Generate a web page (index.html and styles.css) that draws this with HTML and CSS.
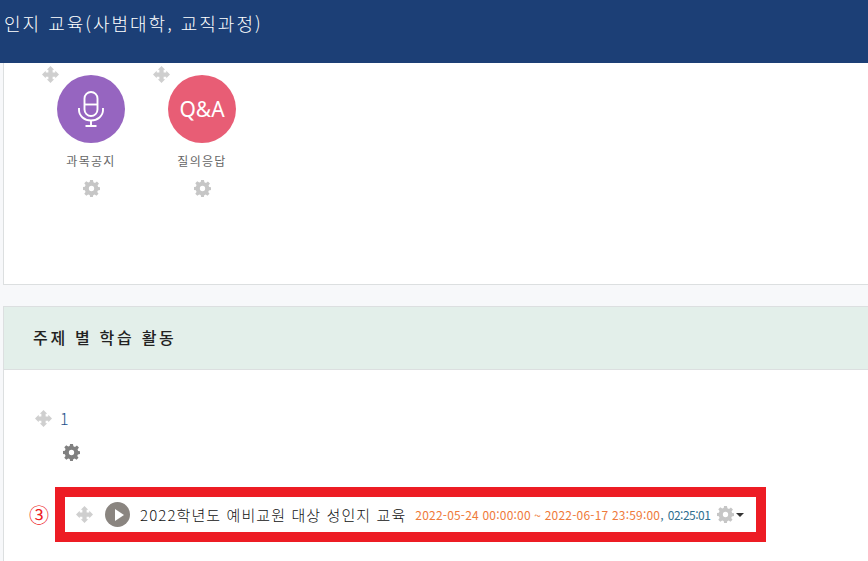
FILE: index.html
```html
<!DOCTYPE html>
<html lang="ko">
<head>
  <meta charset="UTF-8" />
  <meta name="viewport" content="width=device-width, initial-scale=1.0" />
  <title>성인지 교육</title>
  <link rel="stylesheet" href="styles.css">
</head>
<body>
  <svg class="sprites" aria-hidden="true">
    <symbol id="move" viewBox="0 0 16 16">
      <path d="M8 0 11.500 3.500H10V6H12.500V4.500L16 8 12.500 11.500V10H10V12.500H11.500L8 16 4.500 12.500H6V10H3.500V11.500L0 8 3.500 4.500V6H6V3.500H4.500Z"/>
    </symbol>
    <symbol id="gear" viewBox="0 0 16 16">
      <path fill-rule="evenodd" d="M6.600 0H9.400L9.800 2.200 11.300 2.800 13.100 1.500 15 3.400 13.700 5.200 14.300 6.600 16 6.900V9.400L14 9.800 13.400 11.300 14.600 13 12.700 14.900 11 13.700 9.600 14.300 9.300 16H6.700L6.300 14.200 4.900 13.600 3.100 14.800 1.200 12.900 2.400 11.200 1.800 9.700 0 9.400V6.700L1.800 6.300 2.400 4.800 1.200 3.100 3.100 1.200 4.900 2.400 6.300 1.800ZM8 5.500A2.500 2.500 0 1 0 8 10.500 2.500 2.500 0 1 0 8 5.500Z"/>
    </symbol>
  </svg>

  <header class="topbar">
    <h1>인지 교육(사범대학, 교직과정)</h1>
  </header>

  <main class="page">
    <section class="card notice-card">
      <div class="module-list">
        <div class="module">
          <svg class="move-icon handle"><use href="#move"/></svg>
          <div class="circle circle-purple">
            <svg class="mic" viewBox="0 0 26 36" fill="none" stroke="#fff" stroke-width="1.9">
              <rect x="6.500" y="1" width="13" height="24" rx="6.500"/>
              <path d="M6.500 13.500H19.500"/>
              <path d="M1 17V19A12 10.500 0 0 0 25 19V17"/>
              <path d="M13 29.500V35M7.500 35H18.500"/>
            </svg>
          </div>
          <div class="module-name">과목공지</div>
          <svg class="gear-icon"><use href="#gear"/></svg>
        </div>
        <div class="module">
          <svg class="move-icon handle"><use href="#move"/></svg>
          <div class="circle circle-red">Q&amp;A</div>
          <div class="module-name">질의응답</div>
          <svg class="gear-icon"><use href="#gear"/></svg>
        </div>
      </div>
    </section>

    <section class="card topic-card">
      <h2 class="topic-head">주제 별 학습 활동</h2>
      <div class="topic-body">
        <div class="week-title">
          <svg class="move-icon"><use href="#move"/></svg>
          <a class="week-num">1</a>
        </div>
        <svg class="gear-icon gear-dark"><use href="#gear"/></svg>
        <div class="activity-row">
          <span class="step-no">③</span>
          <div class="activity">
            <svg class="move-icon"><use href="#move"/></svg>
            <span class="play"><i></i></span>
            <span class="activity-name">2022학년도 예비교원 대상 성인지 교육</span>
            <span class="period">2022-05-24 00:00:00 ~ 2022-06-17 23:59:00<span class="comma">,</span></span>
            <span class="length">02:25:01</span>
            <svg class="gear-icon"><use href="#gear"/></svg>
            <span class="caret"></span>
          </div>
        </div>
      </div>
    </section>
  </main>
</body>
</html>
```

FILE: styles.css
```css
html, body { margin: 0; height: 100%; overflow: hidden; }
body { background: #f7f8fa; font-family: "Noto Sans CJK KR", "Noto Sans", sans-serif; color: #333; }
.sprites { display: none; }

.topbar { height: 63px; background: #1c3f76; overflow: hidden; }
.topbar h1 { margin: 0; padding: 10px 0 0 4px; font-size: 18px; line-height: 26px; font-weight: 300; letter-spacing: 2px; color: #fff; white-space: nowrap; }

.page { padding-left: 3px; }
.card { background: #fff; border: 1px solid #dcdfe0; border-right: 0; }
.notice-card { height: 221px; border-top: 0; }
.topic-card { margin-top: 21px; height: 254px; border-bottom: 0; }

.module-list { display: flex; gap: 13px; padding: 12px 0 0 38px; }
.module { position: relative; width: 98px; display: flex; flex-direction: column; align-items: center; }
.handle { position: absolute; top: -9px; left: 0; }
.circle { width: 68px; height: 68px; border-radius: 50%; display: flex; align-items: center; justify-content: center; color: #fff; }
.circle-purple { background: #9665c0; }
.circle-red { background: #e85d75; font-size: 21px; font-family: "Noto Sans", sans-serif; }
.mic { width: 26px; height: 36px; }
.module-name { margin-top: 10px; font-size: 12px; line-height: 16px; color: #666; letter-spacing: 1.3px; white-space: nowrap; }
.module .gear-icon { margin-top: 11px; }

.move-icon { width: 17px; height: 17px; fill: #cfcfcf; flex: none; display: block; }
.gear-icon { width: 17px; height: 17px; fill: #c6c6c6; flex: none; display: block; }
.gear-dark { fill: #808080; margin: 17px 0 0 59px; }

.topic-head { margin: 0; height: 62px; padding-left: 29px; background: #e3efea; border-bottom: 1px solid #dcdfe0; font-size: 16px; line-height: 60px; font-weight: 500; letter-spacing: 2.7px; color: #222; }
.topic-body { padding-top: 39px; }
.week-title { display: flex; align-items: center; gap: 8px; padding-left: 31px; height: 18px; }
.week-num { font-size: 16px; font-weight: 300; color: #1c4f8c; line-height: 18px; }

.activity-row { display: flex; align-items: center; margin-top: 26px; padding-left: 25px; }
.step-no { width: 26px; flex: none; color: #ed1c24; font-size: 20px; line-height: 24px; }
.activity { width: 711px; height: 55px; box-sizing: border-box; flex: none; border: 10px solid #ed1c24; background: #fff; display: flex; align-items: center; padding-left: 11px; white-space: nowrap; }
.play { width: 25px; height: 25px; margin-left: 12px; border-radius: 50%; background: #8a8580; display: flex; align-items: center; justify-content: center; flex: none; }
.play i { width: 0; height: 0; margin-left: 3px; border-left: 9px solid #fff; border-top: 6px solid transparent; border-bottom: 6px solid transparent; }
.activity-name { margin-left: 10px; font-size: 15px; font-weight: 300; letter-spacing: 1.1px; color: #111; }
.period { margin-left: 9px; font-size: 12px; letter-spacing: 0.2px; color: #ef7a3a; }
.comma { color: #2f6f8f; }
.length { margin-left: 4px; font-size: 12px; letter-spacing: -0.5px; color: #2f6f8f; }
.activity .gear-icon { margin-left: 7px; }
.caret { margin-left: 2px; width: 0; height: 0; border-top: 4px solid #333; border-left: 4px solid transparent; border-right: 4px solid transparent; }
```
